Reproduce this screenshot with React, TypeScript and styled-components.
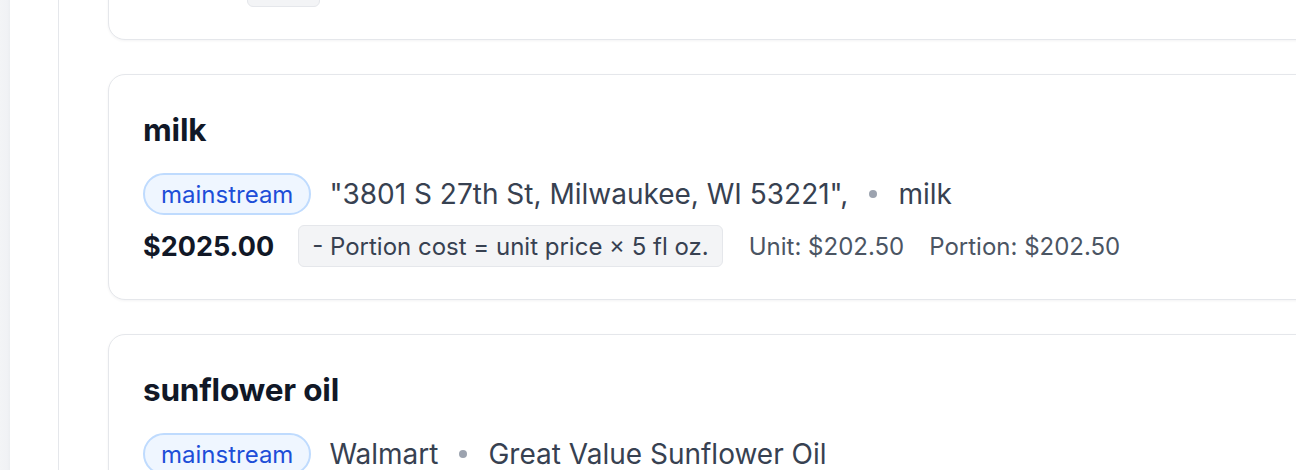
import React from "react";
import styled, { createGlobalStyle } from "styled-components";

const Global = createGlobalStyle`
  html, body { margin: 0; padding: 0; background: #ffffff; }
  body { font-family: Inter, "Noto Sans", "Liberation Sans", sans-serif; overflow: hidden; }
`;

const Shell = styled.div`
  display: flex;
  height: 470px;
  overflow: hidden;
`;

const EdgeStrip = styled.div`
  width: 10px;
  flex: none;
  background: linear-gradient(to right, #f3f4f6 0%, #f1f2f5 70%, #eceef1 100%);
`;

const Rail = styled.div`
  width: 48px;
  flex: none;
  background: #ffffff;
  border-right: 1px solid #e5e7eb;
`;

const Main = styled.main`
  flex: 1;
  min-width: 0;
  padding-left: 49px;
  overflow: hidden;
`;

const List = styled.div`
  display: flex;
  flex-direction: column;
  gap: 34px;
  margin-top: -186px;
  width: 1300px;
`;

const Card = styled.section`
  border: 1px solid #e5e7eb;
  border-radius: 17px;
  background: #ffffff;
  box-shadow: 0 1px 3px rgba(17, 24, 39, 0.05);
  padding: 34px 34px 32px;
  display: flex;
  flex-direction: column;
`;

const Title = styled.h2`
  margin: 0 0 22px;
  font-size: 31.5px;
  line-height: 42px;
  font-weight: 700;
  color: #111827;
  letter-spacing: -0.2px;
`;

const MetaRow = styled.div`
  display: flex;
  align-items: center;
  gap: 18px;
  height: 42px;
  font-size: 28px;
  color: #374151;
`;

const Pill = styled.span`
  display: inline-flex;
  align-items: center;
  height: 42px;
  box-sizing: border-box;
  padding: 0 16px;
  border: 2px solid #bfdbfe;
  border-radius: 999px;
  background: #eff6ff;
  color: #1d4ed8;
  font-size: 24px;
`;

const Dot = styled.span`
  width: 8px;
  height: 8px;
  border-radius: 50%;
  background: #9ca3af;
  margin: 0 3px;
`;

const PriceRow = styled.div`
  display: flex;
  align-items: center;
  margin-top: 10px;
  height: 42px;
`;

const Price = styled.span`
  font-size: 27px;
  font-weight: 700;
  color: #111827;
  margin-right: 24px;
`;

const FormulaChip = styled.span`
  display: inline-flex;
  align-items: center;
  height: 42px;
  box-sizing: border-box;
  padding: 0 13px;
  border: 1px solid #e5e7eb;
  border-radius: 6px;
  background: #f3f4f6;
  color: #374151;
  font-size: 24px;
  margin-right: 26px;
`;

const Stat = styled.span`
  font-size: 24px;
  color: #4b5563;
  margin-right: 25px;
`;

type Item = {
  name: string;
  store: string;
  product: string;
  price: string;
  formula: string;
  unit?: string;
  portion?: string;
};

const items: Item[] = [
  {
    name: "eggs",
    store: "Walmart",
    product: "Great Value Large White Eggs",
    price: "$4.00",
    formula: "- ea",
  },
  {
    name: "milk",
    store: "\"3801 S 27th St, Milwaukee, WI 53221\",",
    product: "milk",
    price: "$2025.00",
    formula: "- Portion cost = unit price × 5 fl oz.",
    unit: "Unit: $202.50",
    portion: "Portion: $202.50",
  },
  {
    name: "sunflower oil",
    store: "Walmart",
    product: "Great Value Sunflower Oil",
    price: "$4.98",
    formula: "- Portion cost = unit price × 1 tbsp",
    unit: "Unit: $0.10",
    portion: "Portion: $0.10",
  },
];

const ItemCard = ({ item }: { item: Item }) => (
  <Card>
    <Title>{item.name}</Title>
    <MetaRow>
      <Pill>mainstream</Pill>
      <span>{item.store}</span>
      <Dot />
      <span>{item.product}</span>
    </MetaRow>
    <PriceRow>
      <Price>{item.price}</Price>
      <FormulaChip>{item.formula}</FormulaChip>
      {item.unit && <Stat>{item.unit}</Stat>}
      {item.portion && <Stat>{item.portion}</Stat>}
    </PriceRow>
  </Card>
);

export default function App() {
  return (
    <>
      <Global />
      <Shell>
        <EdgeStrip />
        <Rail />
        <Main>
          <List>
            {items.map((it) => (
              <ItemCard key={it.name} item={it} />
            ))}
          </List>
        </Main>
      </Shell>
    </>
  );
}
